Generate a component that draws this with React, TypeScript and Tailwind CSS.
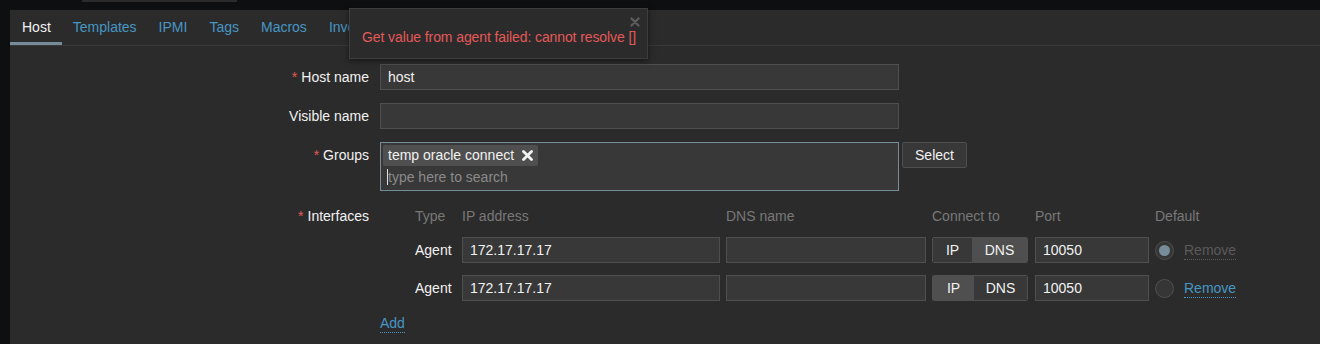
import React from "react";

const Input = ({ w, value }: { w: string; value?: string }) => (
  <div className={`${w} h-[26px] bg-[#383838] border border-[#4f4f4f] flex items-center px-[7px] text-[#f2f2f2]`}>
    {value}
  </div>
);

const Label = ({ text, req }: { text: string; req?: boolean }) => (
  <div className="w-[359px] h-[26px] flex items-center justify-end text-[#f2f2f2] shrink-0">
    {req && <span className="text-[#e45959] mr-[4px]">*</span>}
    {text}
  </div>
);

const Toggle = ({ ip }: { ip: boolean }) => (
  <div className="ml-[6px] w-[96px] h-[26px] flex border border-[#4f4f4f] rounded-[2px] overflow-hidden text-[#f2f2f2]">
    <div className={`${ip ? "w-[41px] bg-[#4f4f4f]" : "w-[39px] bg-[#383838]"} flex items-center justify-center`}>IP</div>
    <div className={`flex-1 ${ip ? "bg-[#383838]" : "bg-[#4f4f4f]"} flex items-center justify-center`}>DNS</div>
  </div>
);

const IfaceRow = ({ first }: { first: boolean }) => (
  <div className="flex items-center h-[26px]">
    <div className="w-[82px] pl-[35px] text-[#f2f2f2]">Agent</div>
    <Input w="w-[258px]" value="172.17.17.17" />
    <div className="ml-[6px]">
      <Input w="w-[200px]" />
    </div>
    <Toggle ip={!first} />
    <div className="ml-[7px]">
      <Input w="w-[114px]" value="10050" />
    </div>
    <div className="ml-[6px] w-[19px] h-[19px] rounded-full border border-[#4f4f4f] bg-[#363636] flex items-center justify-center">
      {first && <div className="w-[11px] h-[11px] rounded-full bg-[#768d99]" />}
    </div>
    <div
      className={`ml-[10px] leading-[18px] border-b border-dotted ${
        first ? "text-[#5a5a5a] border-[#5a5a5a]" : "text-[#4796c4] border-[#4796c4]"
      }`}
    >
      Remove
    </div>
  </div>
);

export default function App() {
  const tabs = ["Host", "Templates", "IPMI", "Tags", "Macros", "Inventory"];
  return (
    <div className="w-[1320px] h-[344px] bg-[#0e0f10] overflow-hidden relative font-['Liberation_Sans',Arial,sans-serif] text-[14px]">
      <div className="h-[10px] flex">
        <div className="ml-[82px] w-[155px] h-[2px] bg-[#2b2b2b]" />
      </div>
      <div className="ml-[10px] h-[334px] bg-[#2b2b2b]">
        <div className="flex h-[36px] border-b border-[#383838]">
          {tabs.map((t, i) => (
            <div
              key={t}
              className={`h-[35px] pt-[2px] flex items-center border-b-[3px] ${
                i === 0 ? "pl-[12px] pr-[11px] border-[#768d99] text-[#f2f2f2]" : "px-[11px] border-transparent text-[#4796c4]"
              }`}
            >
              {t}
            </div>
          ))}
        </div>
        <div className="pt-[18px] flex flex-col gap-[13px]">
          <div className="flex gap-[11px]">
            <Label text="Host name" req />
            <Input w="w-[519px]" value="host" />
          </div>
          <div className="flex gap-[11px]">
            <Label text="Visible name" />
            <Input w="w-[519px]" />
          </div>
          <div className="flex gap-[11px]">
            <Label text="Groups" req />
            <div className="w-[519px] h-[49px] bg-[#383838] border border-[#768d99] pl-[2px] pt-[2px]">
              <div className="inline-flex items-center h-[21px] bg-[#4f4f4f] rounded-[2px] pl-[5px] pr-[5px] text-[#f2f2f2]">
                temp oracle connect
                <svg className="ml-[8px]" width="11" height="11" viewBox="0 0 11 11">
                  <path d="M1.5 1.5 L9.5 9.5 M9.5 1.5 L1.5 9.5" stroke="#f2f2f2" strokeWidth="2.8" strokeLinecap="round" />
                </svg>
              </div>
              <div className="flex items-center h-[22px] pl-[4px]">
                <div className="w-[1px] h-[16px] bg-[#e0e0e0]" />
                <span className="text-[#8a8a8a]">type here to search</span>
              </div>
            </div>
            <div className="ml-[-8px] w-[65px] h-[26px] bg-[#383838] border border-[#4f4f4f] rounded-[2px] flex items-center justify-center text-[#f2f2f2]">
              Select
            </div>
          </div>
          <div className="flex gap-[11px]">
            <div className="w-[359px] h-[24px] flex items-center justify-end text-[#f2f2f2] shrink-0">
              <span className="text-[#e45959] mr-[4px]">*</span>Interfaces
            </div>
            <div className="flex flex-col">
              <div className="flex items-center h-[24px] text-[#787878]">
                <div className="w-[82px] pl-[35px]">Type</div>
                <div className="w-[264px]">IP address</div>
                <div className="w-[206px]">DNS name</div>
                <div className="w-[103px]">Connect to</div>
                <div className="w-[120px]">Port</div>
                <div>Default</div>
              </div>
              <div className="mt-[9px] flex flex-col gap-[12px]">
                <IfaceRow first />
                <IfaceRow first={false} />
              </div>
              <div className="mt-[9px] h-[26px] flex items-center">
                <span className="text-[#4796c4] leading-[18px] border-b border-dotted border-[#4796c4]">Add</span>
              </div>
            </div>
          </div>
        </div>
      </div>
      <div className="absolute left-[349px] top-[8px] w-[299px] h-[51px] bg-[#2b2b2b] border border-[#3d3d3d] shadow-[0_2px_6px_rgba(0,0,0,0.5)] flex items-center pl-[12px] pt-[7px]">
        <span className="text-[#e45959] tracking-[-0.1px]">Get value from agent failed: cannot resolve []</span>
        <svg className="absolute right-[7px] top-[8px]" width="10" height="10" viewBox="0 0 10 10">
          <path d="M1.5 1.5 L8.5 8.5 M8.5 1.5 L1.5 8.5" stroke="#5c5c5c" strokeWidth="2.4" strokeLinecap="round" />
        </svg>
      </div>
    </div>
  );
}
